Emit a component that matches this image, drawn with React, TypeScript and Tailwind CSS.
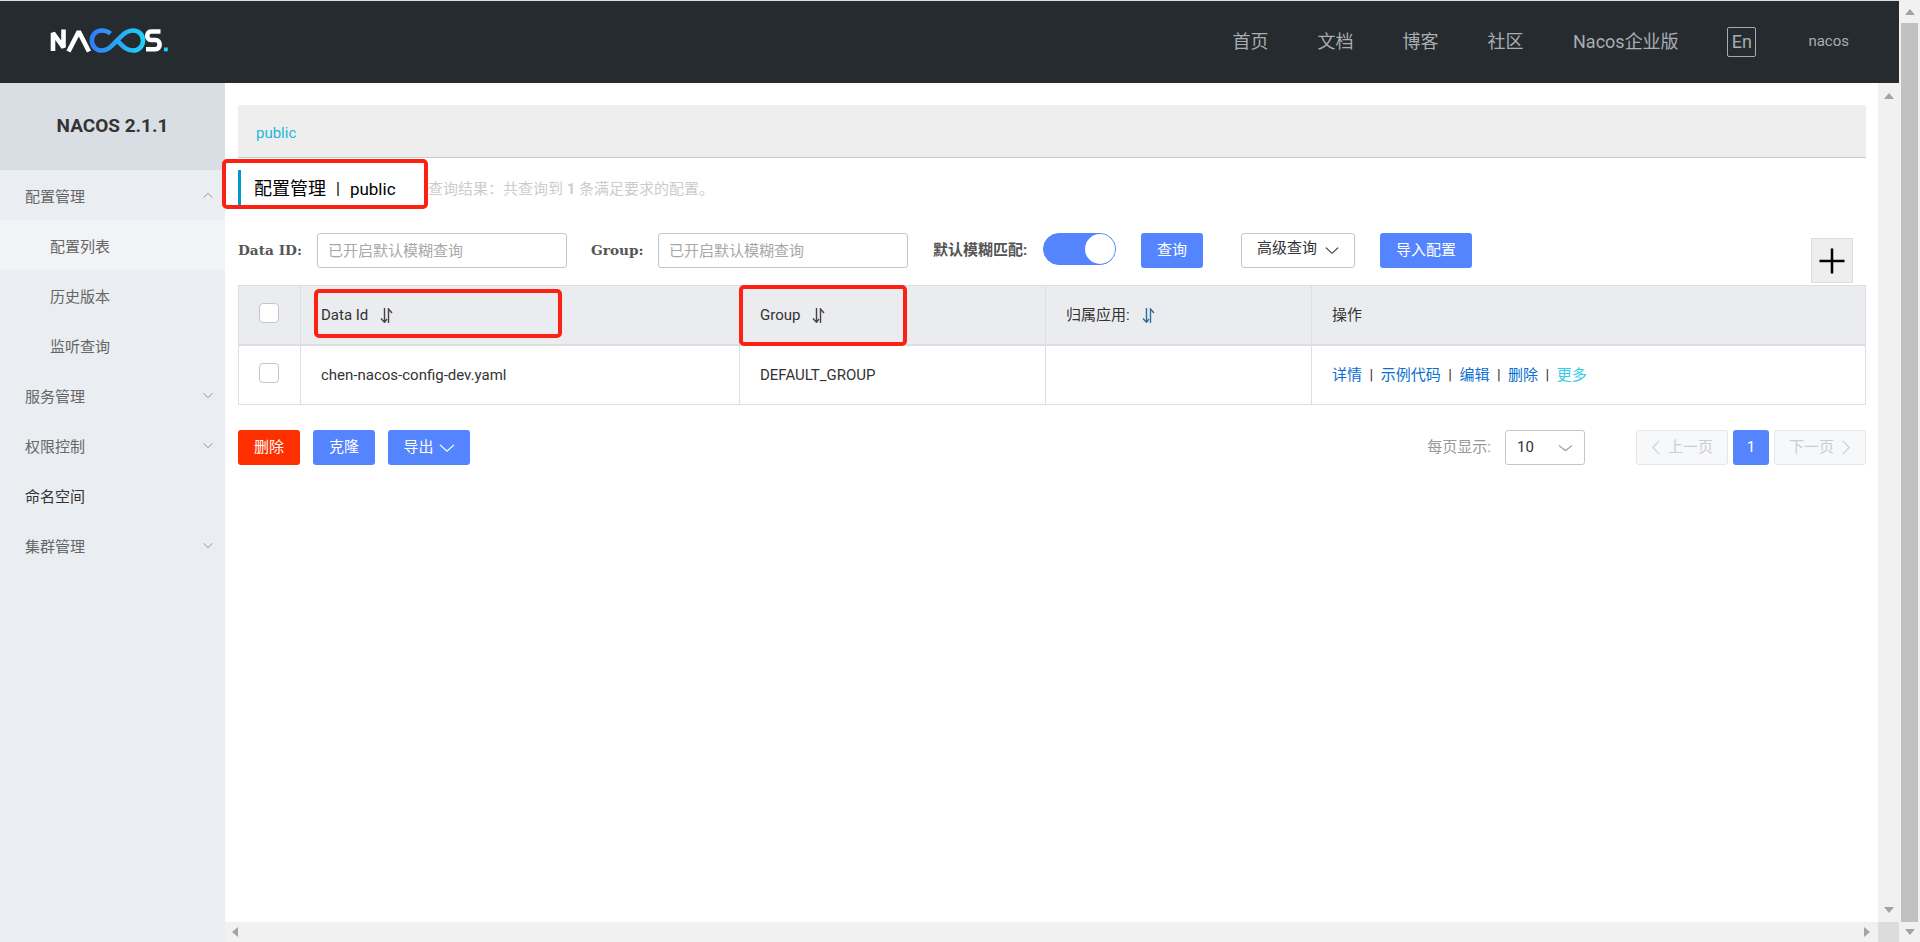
const navLinks = [
  { label: "首页", className: "w-[85px]" },
  { label: "文档", className: "w-[85px]" },
  { label: "博客", className: "w-[85px]" },
  { label: "社区", className: "w-[85.6px]" },
  { label: "Nacos企业版", className: "w-[154.4px]" },
];

const sideItems = [
  { label: "配置管理", chevron: "up" },
  { label: "配置列表", sub: true, active: true },
  { label: "历史版本", sub: true },
  { label: "监听查询", sub: true },
  { label: "服务管理", chevron: "down" },
  { label: "权限控制", chevron: "down" },
  { label: "命名空间", dark: true },
  { label: "集群管理", chevron: "down" },
];

function Logo() {
  return (
    <svg width="130" height="36" viewBox="0 0 130 36" fill="none">
      <defs>
        <linearGradient id="loop" x1="45" y1="0" x2="100" y2="0" gradientUnits="userSpaceOnUse">
          <stop offset="0" stopColor="#2f7bf6" />
          <stop offset="1" stopColor="#1fd2f6" />
        </linearGradient>
      </defs>
      <path d="M8 29V11L18.5 25.5V7.5" stroke="#fff" strokeWidth="4.6" strokeLinejoin="bevel" />
      <path d="M23.5 29.5L33.8 9.5L44 29.5" stroke="#fff" strokeWidth="4.6" strokeLinejoin="bevel" />
      <path
        d="M65.5 11.5C62.5 9 59.5 8.5 56.5 8.5C51 8.5 46.8 13 46.8 18.5C46.8 24 51 28.5 56.5 28.5C63 28.5 66 24.5 72 18.5C78 12.5 81.5 8.5 88 8.5C94 8.5 98 13 98 18.5C98 24 94 28.5 88 28.5C81.5 28.5 78 24.5 72 18.5"
        stroke="url(#loop)"
        strokeWidth="4.6"
      />
      <path d="M115.5 9.5H106C101 9.5 101 18 106 18H110.5C116 18 116 27.2 110.5 27.2H101" stroke="#fff" strokeWidth="4.6" />
      <rect x="119" y="25.5" width="3.8" height="3.8" fill="#1fd2f6" />
    </svg>
  );
}

function Chevron({ dir, className }: { dir: "up" | "down" | "left" | "right"; className: string }) {
  const points = {
    up: "1,9 8,2 15,9",
    down: "1,2 8,9 15,2",
    left: "9,1 2,8 9,15",
    right: "2,1 9,8 2,15",
  }[dir];
  const box = dir === "up" || dir === "down" ? "0 0 16 11" : "0 0 11 16";
  return (
    <svg viewBox={box} className={className} fill="none" stroke="currentColor" preserveAspectRatio="none">
      <polyline points={points} strokeWidth="1.2" />
    </svg>
  );
}

function SortIcon({ className = "text-[#444]" }: { className?: string }) {
  return (
    <svg width="13" height="15" viewBox="0 0 13 15" fill="none" stroke="currentColor" strokeWidth="1.4" className={`ml-3 ${className}`}>
      <path d="M4.5 0V14M1 10.5L4.5 14.3L7 11" />
      <path d="M8.5 15V1L12 5" />
    </svg>
  );
}

function Arrow({ dir }: { dir: "up" | "down" | "left" | "right" }) {
  const points = {
    up: "0,6 5,0 10,6",
    down: "0,0 5,6 10,0",
    left: "6,0 0,5 6,10",
    right: "0,0 6,5 0,10",
  }[dir];
  const vertical = dir === "up" || dir === "down";
  return (
    <svg width={vertical ? 10 : 6} height={vertical ? 6 : 10} className="fill-[#a3a3a3]">
      <polygon points={points} />
    </svg>
  );
}

function Checkbox() {
  return <div className="mb-1 h-5 w-5 rounded-[4px] border border-[#c4c6cf] bg-white" />;
}

function Button({ className, children }: { className: string; children: React.ReactNode }) {
  return (
    <button className={`flex h-[35px] items-center justify-center rounded-[3px] bg-[#5584ff] text-[15px] text-white ${className}`}>
      {children}
    </button>
  );
}

function RedBox({ className }: { className: string }) {
  return <div className={`pointer-events-none absolute z-10 rounded-[5px] border-4 border-[#fb2113] ${className}`} />;
}

function Sidebar() {
  return (
    <aside className="flex w-[225px] shrink-0 flex-col bg-[#eaedf1]">
      <div className="flex h-[87px] items-center justify-center bg-[#d9dee4] text-[19px] font-bold text-[#333]">NACOS 2.1.1</div>
      {sideItems.map((item) => (
        <div
          key={item.label}
          className={`flex h-[50px] items-center justify-between pr-3 pt-[5px] text-[15px] ${item.sub ? "pl-[50px]" : "pl-[25px]"} ${
            item.active ? "bg-[#f2f3f7]" : ""
          } ${item.dark ? "text-[#333]" : "text-[#666]"}`}
        >
          <span>{item.label}</span>
          {item.chevron === "up" && <Chevron dir="up" className="mb-[5px] h-[7px] w-[10px] text-[#777]" />}
          {item.chevron === "down" && <Chevron dir="down" className="mb-[5px] h-[7px] w-[10px] text-[#777]" />}
        </div>
      ))}
    </aside>
  );
}

function Toolbar() {
  const label = "font-['DejaVu_Serif','Noto_Sans_CJK_SC',serif] text-[13.7px] font-bold text-[#555]";
  const input =
    "h-[35px] w-[250px] rounded-[3px] border border-[#c4c6cf] bg-white px-[10px] text-[15px] outline-none placeholder:text-[#a8a8a8]";
  return (
    <div className="flex h-[52px] items-start">
      <label className={`flex h-[35px] w-[79px] items-center ${label}`}>Data ID:</label>
      <input className={input} placeholder="已开启默认模糊查询" readOnly />
      <label className={`ml-6 flex h-[35px] w-[67px] items-center ${label}`}>Group:</label>
      <input className={input} placeholder="已开启默认模糊查询" readOnly />
      <span className="ml-[25px] flex h-[35px] w-[110px] items-center text-[15px] font-bold text-[#555]">默认模糊匹配:</span>
      <div className="flex h-8 w-[73px] justify-end rounded-full border border-[#5584ff] bg-[#5584ff]">
        <div className="h-[30px] w-[30px] rounded-full bg-white" />
      </div>
      <Button className="ml-[25px] w-[62px]">查询</Button>
      <button className="ml-[38px] flex h-[35px] w-[114px] items-center justify-center gap-2 rounded-[3px] border border-[#c4c6cf] bg-white pb-1 text-[15px] text-[#333]">
        高级查询
        <Chevron dir="down" className="mt-1 h-[9px] w-[14px] text-[#333]" />
      </button>
      <Button className="ml-[25px] w-[92px]">导入配置</Button>
      <div className="ml-auto mr-[13px] mt-[5px] flex h-[45px] w-[42px] items-center justify-center border border-[#ddd] bg-[#eee]">
        <svg width="26" height="26" viewBox="0 0 26 26" stroke="#000" strokeWidth="2.5">
          <path d="M0.5 13H25.5M13 0.5V25.5" />
        </svg>
      </div>
    </div>
  );
}

function ConfigTable() {
  const cols = "grid grid-cols-[62px_439px_306px_266px_1fr]";
  const cell = "flex items-center border-r border-[#dcdee3] pl-5";
  return (
    <div className="border border-[#dcdee3] text-[15px] text-[#333]">
      <div className={`${cols} h-[60px] border-b-2 border-[#dcdee3] bg-[#ebecf0]`}>
        <div className={`${cell} pl-5`}>
          <Checkbox />
        </div>
        <div className={`${cell} relative`}>
          Data Id
          <SortIcon />
          <RedBox className="left-[13px] top-[3px] h-[49px] w-[248px]" />
        </div>
        <div className={`${cell} relative`}>
          Group
          <SortIcon />
          <RedBox className="-left-px -top-px h-[61px] w-[168px]" />
        </div>
        <div className={cell}>
          归属应用:
          <SortIcon className="text-[#2d6f9e]" />
        </div>
        <div className="flex items-center pl-5">操作</div>
      </div>
      <div className={`${cols} h-[58px]`}>
        <div className={cell}>
          <Checkbox />
        </div>
        <div className={cell}>chen-nacos-config-dev.yaml</div>
        <div className={cell}>DEFAULT_GROUP</div>
        <div className={cell} />
        <div className="flex items-center pl-5 text-[#0a6ed1]">
          <a>详情</a>
          <span className="mx-[7.5px] text-[#333]">|</span>
          <a>示例代码</a>
          <span className="mx-[7.5px] text-[#333]">|</span>
          <a>编辑</a>
          <span className="mx-[7.5px] text-[#333]">|</span>
          <a>删除</a>
          <span className="mx-[7.5px] text-[#333]">|</span>
          <a className="text-[#33cde5]">更多</a>
        </div>
      </div>
    </div>
  );
}

function Footer() {
  const pageBtn =
    "flex h-[35px] w-[92px] items-center justify-center gap-[7px] rounded-[3px] border border-[#e6e7eb] bg-[#f7f8fa] text-[15px] text-[#ccc]";
  return (
    <div className="mt-[25px] flex items-center">
      <Button className="w-[62px] bg-[#ff3000]">删除</Button>
      <Button className="ml-[13px] w-[62px]">克隆</Button>
      <Button className="ml-[13px] w-[82px] gap-[5px]">
        导出
        <Chevron dir="down" className="h-[10px] w-[16px] text-white" />
      </Button>
      <span className="ml-auto mr-[14px] text-[15px] text-[#999]">每页显示:</span>
      <div className="flex h-[35px] w-[80px] items-center justify-between rounded-[3px] border border-[#c4c6cf] bg-white pl-[11px] pr-[11px] text-[15px] text-[#333]">
        10
        <Chevron dir="down" className="h-[8px] w-[15px] text-[#888]" />
      </div>
      <div className="ml-[51px] flex items-center gap-[5px]">
        <button className={pageBtn}>
          <Chevron dir="left" className="h-[15px] w-[10px]" />
          上一页
        </button>
        <button className="flex h-[35px] w-9 items-center justify-center rounded-[3px] bg-[#5584ff] text-[15px] text-white">1</button>
        <button className={pageBtn}>
          下一页
          <Chevron dir="right" className="h-[15px] w-[10px]" />
        </button>
      </div>
    </div>
  );
}

export default function App() {
  return (
    <div className="flex h-screen w-full flex-col overflow-hidden bg-white font-[Roboto,'Noto_Sans_CJK_SC',sans-serif]">
      <div className="flex min-h-0 flex-1">
        <div className="flex min-w-0 flex-1 flex-col">
          <div className="h-px bg-[#dedede]" />
          <header className="flex h-[82px] shrink-0 items-center bg-[#262b30] pr-[50px]">
            <div className="mb-1 ml-[45px]">
              <Logo />
            </div>
            <nav className="ml-auto flex items-center text-lg text-[#a9adb0]">
              {navLinks.map((link) => (
                <span key={link.label} className={link.className}>
                  {link.label}
                </span>
              ))}
              <span className="flex h-[30px] w-[29px] items-center justify-center rounded-[2px] border border-[#aaa] text-lg">En</span>
              <span className="ml-[52px] text-[15px]">nacos</span>
            </nav>
          </header>
          <div className="flex min-h-0 flex-1">
            <Sidebar />
            <div className="flex min-w-0 flex-1 flex-col">
              <div className="flex min-h-0 flex-1">
                <main className="min-w-0 flex-1 pl-[13px] pr-3 pt-[22px]">
                  <div className="flex h-[53px] items-end border-b border-[#ccc] bg-[#eee] pb-[13px] pl-[18px] text-[15px] text-[#1fb8d8]">
                    public
                  </div>
                  <div className="relative mt-3 flex h-9 items-center">
                    <div className="flex h-9 w-[190px] items-center border-l-[3px] border-[#09c] pl-[13px] pt-[2px] text-lg text-black">
                      配置管理
                      <span className="mx-[10px] text-base">|</span>
                      <span className="text-[17px]">public</span>
                    </div>
                    <span className="pt-[2px] text-[15px] text-[#ccc]">
                      查询结果：共查询到 <b>1</b> 条满足要求的配置。
                    </span>
                    <RedBox className="-left-4 -top-[11px] h-[50px] w-[206px]" />
                  </div>
                  <div className="mt-[27px]">
                    <Toolbar />
                    <ConfigTable />
                    <Footer />
                  </div>
                </main>
                <div className="flex w-[21px] shrink-0 flex-col items-center justify-between bg-[#f1f1f1] pb-[9px] pt-[10px]">
                  <Arrow dir="up" />
                  <Arrow dir="down" />
                </div>
              </div>
              <div className="flex h-5 shrink-0 bg-[#f1f1f1]">
                <div className="flex flex-1 items-center justify-between pl-[7px] pr-2">
                  <Arrow dir="left" />
                  <Arrow dir="right" />
                </div>
                <div className="w-[21px] bg-[#dcdcdc]" />
              </div>
            </div>
          </div>
        </div>
        <div className="flex w-[21px] shrink-0 flex-col bg-[#f1f1f1]">
          <div className="flex h-[23px] items-center justify-center">
            <Arrow dir="up" />
          </div>
          <div className="mx-[2px] flex-1 bg-[#c1c1c1]" />
          <div className="flex h-5 items-center justify-center">
            <Arrow dir="down" />
          </div>
        </div>
      </div>
    </div>
  );
}
